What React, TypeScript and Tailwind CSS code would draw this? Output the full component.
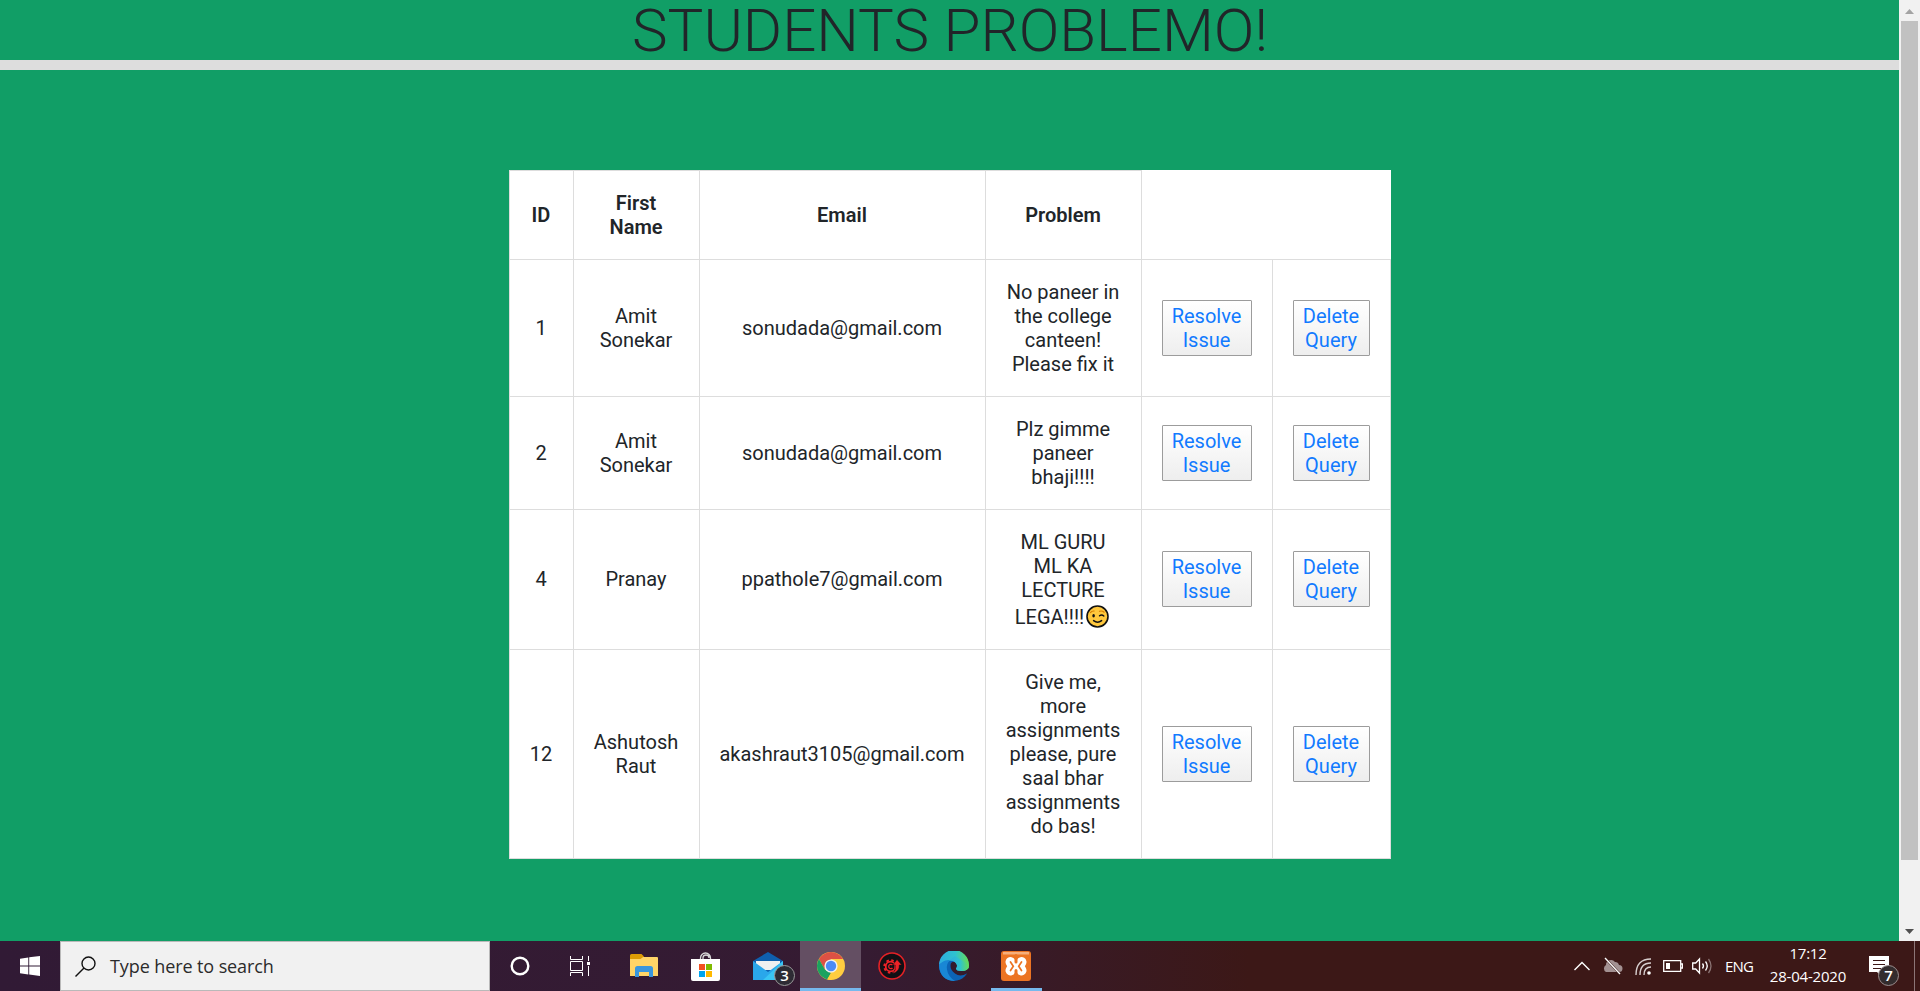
import React from "react";

type Student = { id: number; name: string[]; email: string; problem: string[]; wink?: boolean; height: string };

const students: Student[] = [
  { id: 1, name: ["Amit", "Sonekar"], email: "sonudada@gmail.com", problem: ["No paneer in", "the college", "canteen!", "Please fix it"], height: "h-[137px]" },
  { id: 2, name: ["Amit", "Sonekar"], email: "sonudada@gmail.com", problem: ["Plz gimme", "paneer", "bhaji!!!!"], height: "h-[113px]" },
  { id: 4, name: ["Pranay"], email: "ppathole7@gmail.com", problem: ["ML GURU", "ML KA", "LECTURE", "LEGA!!!!"], wink: true, height: "h-[140px]" },
  { id: 12, name: ["Ashutosh", "Raut"], email: "akashraut3105@gmail.com", problem: ["Give me,", "more", "assignments", "please, pure", "saal bhar", "assignments", "do bas!"], height: "h-[209px]" },
];

const base = "border border-[#dddddd] px-0 pt-0 text-center align-middle";
const cell = `${base} pb-0`;
const raisedCell = `${base} pb-[2px]`;
const head = `${cell} font-semibold`;

function Lines({ lines }: { lines: string[] }) {
  return (
    <>
      {lines.map((line, i) => (
        <span key={i} className="block whitespace-nowrap">{line}</span>
      ))}
    </>
  );
}

function Wink() {
  return (
    <svg className="h-[23px] w-[23px]" viewBox="0 0 23 23">
      <circle cx="11.5" cy="11.5" r="10.5" fill="#ffc83d" stroke="#111" strokeWidth="1.6" />
      <ellipse cx="7.6" cy="10.8" rx="1.3" ry="1.8" fill="#111" />
      <path d="M13.5 10.8q2.2-1.8 4.3.2" fill="none" stroke="#111" strokeWidth="1.4" strokeLinecap="round" />
      <path d="M4.5 7.6q1.4-1.800 3.600-1.600M13.500 6.300q2.400-.9 4.600.9" fill="none" stroke="#d67d00" strokeWidth="1.2" strokeLinecap="round" />
      <path d="M7.600 15.600q4 3.200 8 0" fill="none" stroke="#111" strokeWidth="1.500" strokeLinecap="round" />
    </svg>
  );
}

function ActionButton({ lines, width }: { lines: string[]; width: string }) {
  return (
    <button className={`mx-auto block h-[56px] rounded-[1px] border border-[#9c9c9c] bg-linear-to-b from-white to-[#eeeeee] p-0 text-[#117aff] ${width}`}>
      <Lines lines={lines} />
    </button>
  );
}

function Page() {
  return (
    <main className="h-full flex-1 bg-[#119e66] font-[Roboto,sans-serif] text-[#212529]">
      <h1 className="h-[60px] pl-px text-center text-[60px] leading-[62px] font-light whitespace-nowrap">
        STUDENTS PROBLEMO!
      </h1>
      <div className="h-[10px] bg-[#dddddd]" />
      <table className="mx-auto mt-[100px] w-[882px] table-fixed border-collapse bg-white text-[20px] leading-[24px]">
        <colgroup>
          <col className="w-[64px]" />
          <col className="w-[126px]" />
          <col className="w-[286px]" />
          <col className="w-[156px]" />
          <col className="w-[131px]" />
          <col className="w-[118px]" />
        </colgroup>
        <thead>
          <tr className="h-[89px]">
            <th className={head}>ID</th>
            <th className={head}><Lines lines={["First", "Name"]} /></th>
            <th className={head}>Email</th>
            <th className={head}>Problem</th>
          </tr>
        </thead>
        <tbody>
          {students.map((s) => {
            const side = s.wink ? raisedCell : cell;
            return (
              <tr key={s.id} className={s.height}>
                <td className={side}>{s.id}</td>
                <td className={side}><Lines lines={s.name} /></td>
                <td className={side}>{s.email}</td>
                <td className={cell}>
                  {s.wink ? (
                    <>
                      <Lines lines={s.problem.slice(0, -1)} />
                      <span className="flex h-[27px] items-center justify-center gap-[2px] pt-[2px] pr-[2px]">
                        <span>{s.problem[s.problem.length - 1]}</span>
                        <Wink />
                      </span>
                    </>
                  ) : (
                    <Lines lines={s.problem} />
                  )}
                </td>
                <td className={side}><ActionButton lines={["Resolve", "Issue"]} width="w-[90px]" /></td>
                <td className={side}><ActionButton lines={["Delete", "Query"]} width="w-[77px]" /></td>
              </tr>
            );
          })}
        </tbody>
      </table>
    </main>
  );
}

function Scrollbar() {
  return (
    <aside className="flex h-full w-[21px] flex-col items-center bg-[#f1f1f1]">
      <svg className="h-[21px] w-[17px] shrink-0" viewBox="0 0 17 21"><path d="M4 14l4.500-5 4.500 5z" fill="#a3a3a3" /></svg>
      <div className="h-[839px] w-[17px] bg-[#c1c1c1]" />
      <svg className="mt-auto h-[21px] w-[17px]" viewBox="0 0 17 21"><path d="M4 9l4.500 5 4.500-5z" fill="#505050" /></svg>
    </aside>
  );
}

function TaskItem({ children, className = "w-[62px]" }: { children: React.ReactNode; className?: string }) {
  return <div className={`flex h-[50px] shrink-0 items-center justify-center ${className}`}>{children}</div>;
}

function Taskbar() {
  return (
    <footer className="flex h-[50px] w-full shrink-0 items-center bg-linear-to-r from-[#311a35] from-0% via-[#351b32] via-45% to-[#3c1817] to-65% font-['Open_Sans',sans-serif] text-white">
      <div className="flex w-[60px] justify-center">
        <svg width="20" height="20" viewBox="0 0 20 20" fill="#fff"><path d="M0 2.700l8.300-1.200v8H0zM9.200 1.300L20 0v9.500H9.200zM0 10.400h8.300v8L0 17.300zM9.200 10.400H20V20L9.200 18.500z" /></svg>
      </div>
      <div className="flex h-[50px] w-[430px] items-center border border-[#b9b9b9] bg-[#f1f1f1] pl-[14px] text-[#2b2b2b]">
        <svg width="21" height="21" viewBox="0 0 21 21" fill="none" stroke="#111" strokeWidth="1.400"><circle cx="13.500" cy="7.500" r="6.500" /><path d="M9 12L.5 20.500" /></svg>
        <span className="ml-[14px] text-[18px] leading-[24px] tracking-[-0.1px]">Type here to search</span>
      </div>

      <TaskItem className="w-[60px]">
        <svg width="20" height="20" viewBox="0 0 20 20"><circle cx="10" cy="10" r="8.300" fill="none" stroke="#fff" strokeWidth="2.400" /></svg>
      </TaskItem>
      <TaskItem className="w-[62px] pr-[2px]">
        <svg width="20" height="20" viewBox="0 0 20 20" fill="none" stroke="#fff"><path d="M.5 0v3.500h12V0M.5 20v-3.500h12V20M.5 5.500h12v9H.5zM18.500 0v5M18.500 10v10" /><path d="M17 6h3v3h-3z" fill="#fff" stroke="none" /></svg>
      </TaskItem>
      <TaskItem className="w-[62px] pl-[2px]">
        <svg width="28" height="24" viewBox="0 0 28 24"><path d="M0 1.500Q0 0 1.500 0h10L14 2.500 11.500 5H0z" fill="#dd9b05" /><path d="M0 5h10.500l2.500-2h14q1 0 1 1v18H0z" fill="#ffd467" /><path d="M5 23V14.500Q5 12 7.500 12h13Q23 12 23 14.500V23h-4v-5H9v5z" fill="#3a96dd" /></svg>
      </TaskItem>
      <TaskItem className="w-[62px] pl-px">
        <svg width="29" height="29" viewBox="0 0 29 29"><path d="M9.500 8V6a5 5 0 0 1 10 0v2M12 8V6a3 3 0 0 1 6 0" fill="none" stroke="#d8d8d8" strokeWidth="1.300" /><path d="M0 7h29v20q0 2-2 2H2q-2 0-2-2z" fill="#fff" /><path d="M8 12h6v6H8z" fill="#f25022" /><path d="M15 12h6v6h-6z" fill="#7fba00" /><path d="M8 19h6v6H8z" fill="#00a4ef" /><path d="M15 19h6v6h-6z" fill="#ffb900" /></svg>
      </TaskItem>
      <TaskItem className="relative w-[64px]">
        <svg width="30" height="28" viewBox="0 0 30 28"><path d="M0 9L15 0l15 9v18H0z" fill="#0f5fae" /><path d="M3 9h24v9H3z" fill="#f0f0f0" /><path d="M0 9l15 11L30 9v19H0z" fill="#2aa7ea" /><path d="M30 9L10 28h20z" fill="#39c5f3" /></svg>
        <span className="absolute top-[24px] left-[38px] flex h-[21px] w-[21px] items-center justify-center rounded-full border border-[#9a9a9a] bg-[#2d2b34] text-[15px] leading-none font-semibold">3</span>
      </TaskItem>
      <TaskItem className="relative w-[61px] bg-[#644f63]">
        <svg width="28" height="28" viewBox="0 0 28 28"><circle cx="14" cy="14" r="14" fill="#ffcd40" /><path d="M1.900 7A14 14 0 0 1 26.100 7H14L7.900 17.500z" fill="#dd5144" /><path d="M1.900 7L7.900 17.500 14 21l-4 6.400A14 14 0 0 1 1.900 7z" fill="#1aa260" /><path d="M14 21L10.500 27.500A14 14 0 0 0 14 28l6-10.500z" fill="#ffcd40" /><circle cx="14" cy="14" r="6.600" fill="#f1f1f1" /><circle cx="14" cy="14" r="5.200" fill="#4c8bf5" /></svg>
        <span className="absolute bottom-0 left-0 h-[3px] w-full bg-[#76b9ed]" />
      </TaskItem>
      <TaskItem>
        <svg width="28" height="28" viewBox="0 0 28 28"><circle cx="14" cy="14" r="13" fill="#111015" stroke="#e32226" strokeWidth="1.600" /><circle cx="12.500" cy="14.500" r="6.300" fill="none" stroke="#ee2227" strokeWidth="1.800" strokeDasharray="2.500 2.450" /><circle cx="12.500" cy="14.500" r="4.800" fill="none" stroke="#ee2227" strokeWidth="1.800" /><path d="M14.500 13a2.200 2.200 0 1 0 0 3" fill="none" stroke="#ee2227" strokeWidth="1.200" /><path d="M17.300 13h-2.500L19 7.500l4.800 5.500h-2.500q.5 6.500-6.500 8.500 3.500-3.500 2.500-8.500z" fill="#ee2227" stroke="#111015" strokeWidth=".5" /></svg>
      </TaskItem>
      <TaskItem>
        <svg width="30" height="30" viewBox="0 0 30 30"><defs><linearGradient id="edgeTop"><stop offset="0" stopColor="#2dacdf" /><stop offset=".55" stopColor="#2fc3cf" /><stop offset="1" stopColor="#67dd54" /></linearGradient></defs><circle cx="15" cy="15" r="15" fill="#0c63b5" /><path d="M0 14A15 15 0 0 1 30 14q0 6-7 6-6 0-6-2.500 2-2 1-4Q16 9 10 9.500 4 10 0 14z" fill="url(#edgeTop)" /><path d="M0 14q5-6 11-4.500-4 3-3 9 1 7 8 11.500Q1 30 0 14z" fill="#1987d5" /><path d="M12 12q4-3 6 1 .8 3-1 4.500 0 2.500 6 2.500 4 0 6.500-3L31 22l-3 .5q-7 4-12 0-6-4-4-10.500z" fill="#341c2c" /><path d="M17 17.500q1-1.500 1-3Q16 9 10 9.500L16 5l14 9q0 6-7 6-6 0-6-2.500z" fill="url(#edgeTop)" /></svg>
      </TaskItem>
      <TaskItem className="relative w-[62px]">
        <svg width="30" height="30" viewBox="0 0 30 30">
          <rect width="30" height="30" rx="3" fill="#ec7423" />
          <path d="M2 1h26v2.500H2z" fill="#f6ae7b" />
          <path d="M9.500 11L12 15h6l2.500-4M9.500 19.500L12 15h6l2.500 4.500" fill="none" stroke="#fff" strokeWidth="10" strokeLinecap="round" strokeLinejoin="round" />
          <path d="M15 4.500v6.500M15 19.500v5.500" stroke="#ec7423" strokeWidth="3" strokeLinecap="round" />
          <path d="M9.500 11L12.300 15.200 9.500 19.500M20.500 11L17.700 15.200 20.500 19.500" fill="none" stroke="#ec7423" strokeWidth="1.700" strokeLinecap="round" />
        </svg>
        <span className="absolute bottom-0 left-[6px] h-[3px] w-[51px] bg-[#76b9ed]" />
      </TaskItem>

      <div className="ml-auto flex h-[50px] items-center">
        <svg width="16" height="10" viewBox="0 0 16 10" fill="none" stroke="#fff" strokeWidth="1.400"><path d="M.5 9L8 1.500 15.500 9" /></svg>
        <svg className="ml-[12px]" width="21" height="18" viewBox="0 0 21 18"><path d="M4 15a4 4 0 0 1 0-7 5 5 0 0 1 9-3 4 4 0 0 1 4 3 3.500 3.500 0 0 1 0 7z" fill="#a39192" /><path d="M3 1l15 16" stroke="#3c1817" strokeWidth="2.200" /><path d="M3 1l15 16" stroke="#fff" strokeWidth="1.300" /></svg>
        <svg className="ml-[12px]" width="17" height="17" viewBox="0 0 17 17" fill="none" stroke="#d8cfcf" strokeWidth="1.400"><path d="M1 17Q1 1 16 1M5 17Q5 5 16 5M9 17Q9 9 16 9" /><circle cx="14" cy="15" r="1.800" fill="#fff" stroke="none" /></svg>
        <svg className="ml-[11px]" width="20" height="12" viewBox="0 0 20 12"><path d="M.7.700h17v10.600H.7zM18 4h1.500v4H18" fill="none" stroke="#fff" strokeWidth="1.300" /><path d="M3 3h4v6H3z" fill="#fff" /></svg>
        <svg className="ml-[9px]" width="21" height="18" viewBox="0 0 21 18" fill="none" stroke="#fff" strokeWidth="1.300"><path d="M.7 6h3L7.500 2v14l-3.800-4h-3zM10.500 6.500q2 2.500 0 5M13.500 4.500q3.500 4.500 0 9" /><path d="M16.500 2q5 7 0 14" stroke="#8a7373" /></svg>
        <span className="ml-[12px] w-[28px] text-[15px] tracking-[-0.8px]">ENG</span>
        <div className="mb-[2px] ml-[16px] flex w-[78px] flex-col items-center text-[15px] leading-[23px] tracking-[-0.2px] whitespace-nowrap"><span>17:12</span><span>28-04-2020</span></div>
        <div className="relative mt-[8px] ml-[22px] h-[30px] w-[30px]">
          <svg width="30" height="30" viewBox="0 0 30 30"><path d="M0 1h20v16h-7v5l-5-5H0z" fill="#fff" /><path d="M4 5.500h12M4 9.500h12M4 13.500h8" stroke="#3c1817" strokeWidth="1.200" /></svg>
          <span className="absolute top-[10px] left-[9px] flex h-[21px] w-[21px] items-center justify-center rounded-full border border-[#9a8e8e] bg-[#332c2d] text-[15px] leading-none font-semibold">7</span>
        </div>
        <div className="ml-[15px] h-full w-px bg-[#8c7677]" />
        <div className="w-[5px]" />
      </div>
    </footer>
  );
}

export default function App() {
  return (
    <div className="flex h-[991px] w-[1920px] flex-col overflow-hidden">
      <div className="flex h-[941px]">
        <Page />
        <Scrollbar />
      </div>
      <Taskbar />
    </div>
  );
}
